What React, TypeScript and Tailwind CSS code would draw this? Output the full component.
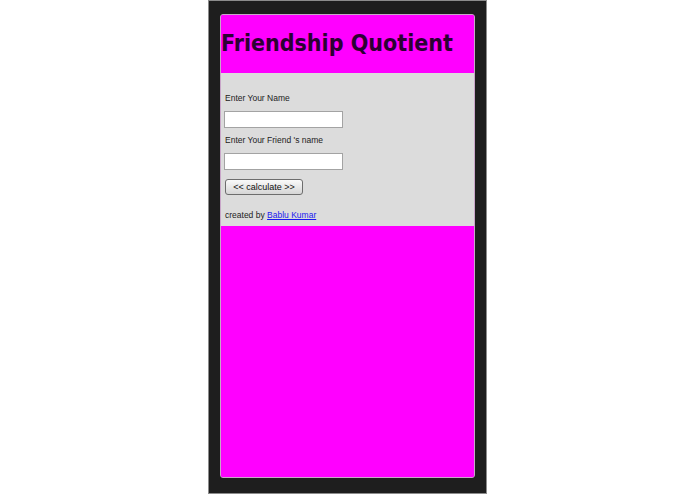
export default function App() {
  return (
    <div className="min-h-[494px] w-full bg-white flex justify-center font-['Liberation_Sans',Arial,sans-serif]">
      <div className="w-[279px] h-[494px] border border-[#8c8c8c] bg-[#1e1e1e] px-[11px] pt-[13px] pb-[15px]">
        <div className="h-full flex flex-col rounded-[3px] border border-[#c9a6c9] overflow-hidden bg-[#ff00ff]">
          {/* header */}
          <div className="h-[58px] flex items-center bg-[#ff00ff]">
            <h1 className="pb-[1px] whitespace-nowrap text-[23px] font-bold leading-none text-[#2c0033] font-['DejaVu_Sans_Condensed','DejaVu_Sans',sans-serif]">
              Friendship Quotient
            </h1>
          </div>

          {/* form */}
          <div className="h-[153px] bg-[#dcdcdc] px-[3px] pt-[20px] text-[8.5px] text-[#222]">
            <label className="block pl-[1px] leading-[11px]">Enter Your Name</label>
            <input
              type="text"
              className="block mt-[7px] w-[119px] h-[17px] bg-white border border-[#a3a3a3] outline-none"
            />
            <label className="block pl-[1px] mt-[7px] leading-[11px]">Enter Your Friend 's name</label>
            <input
              type="text"
              className="block mt-[7px] w-[119px] h-[17px] bg-white border border-[#a3a3a3] outline-none"
            />
            <button className="mt-[9px] ml-[1px] w-[78px] h-[16px] rounded-[3px] border border-[#6d6d6d] bg-gradient-to-b from-[#fafafa] to-[#d6d6d6] text-[9px] leading-none text-[#111]">
              &lt;&lt; calculate &gt;&gt;
            </button>
            <p className="mt-[15px] pl-[1px] leading-[11px]">
              created by{" "}
              <a href="#" className="text-[#1a1aee] underline">
                Bablu Kumar
              </a>
            </p>
          </div>

          {/* body */}
          <div className="flex-1 bg-[#ff00ff]" />
        </div>
      </div>
    </div>
  );
}
